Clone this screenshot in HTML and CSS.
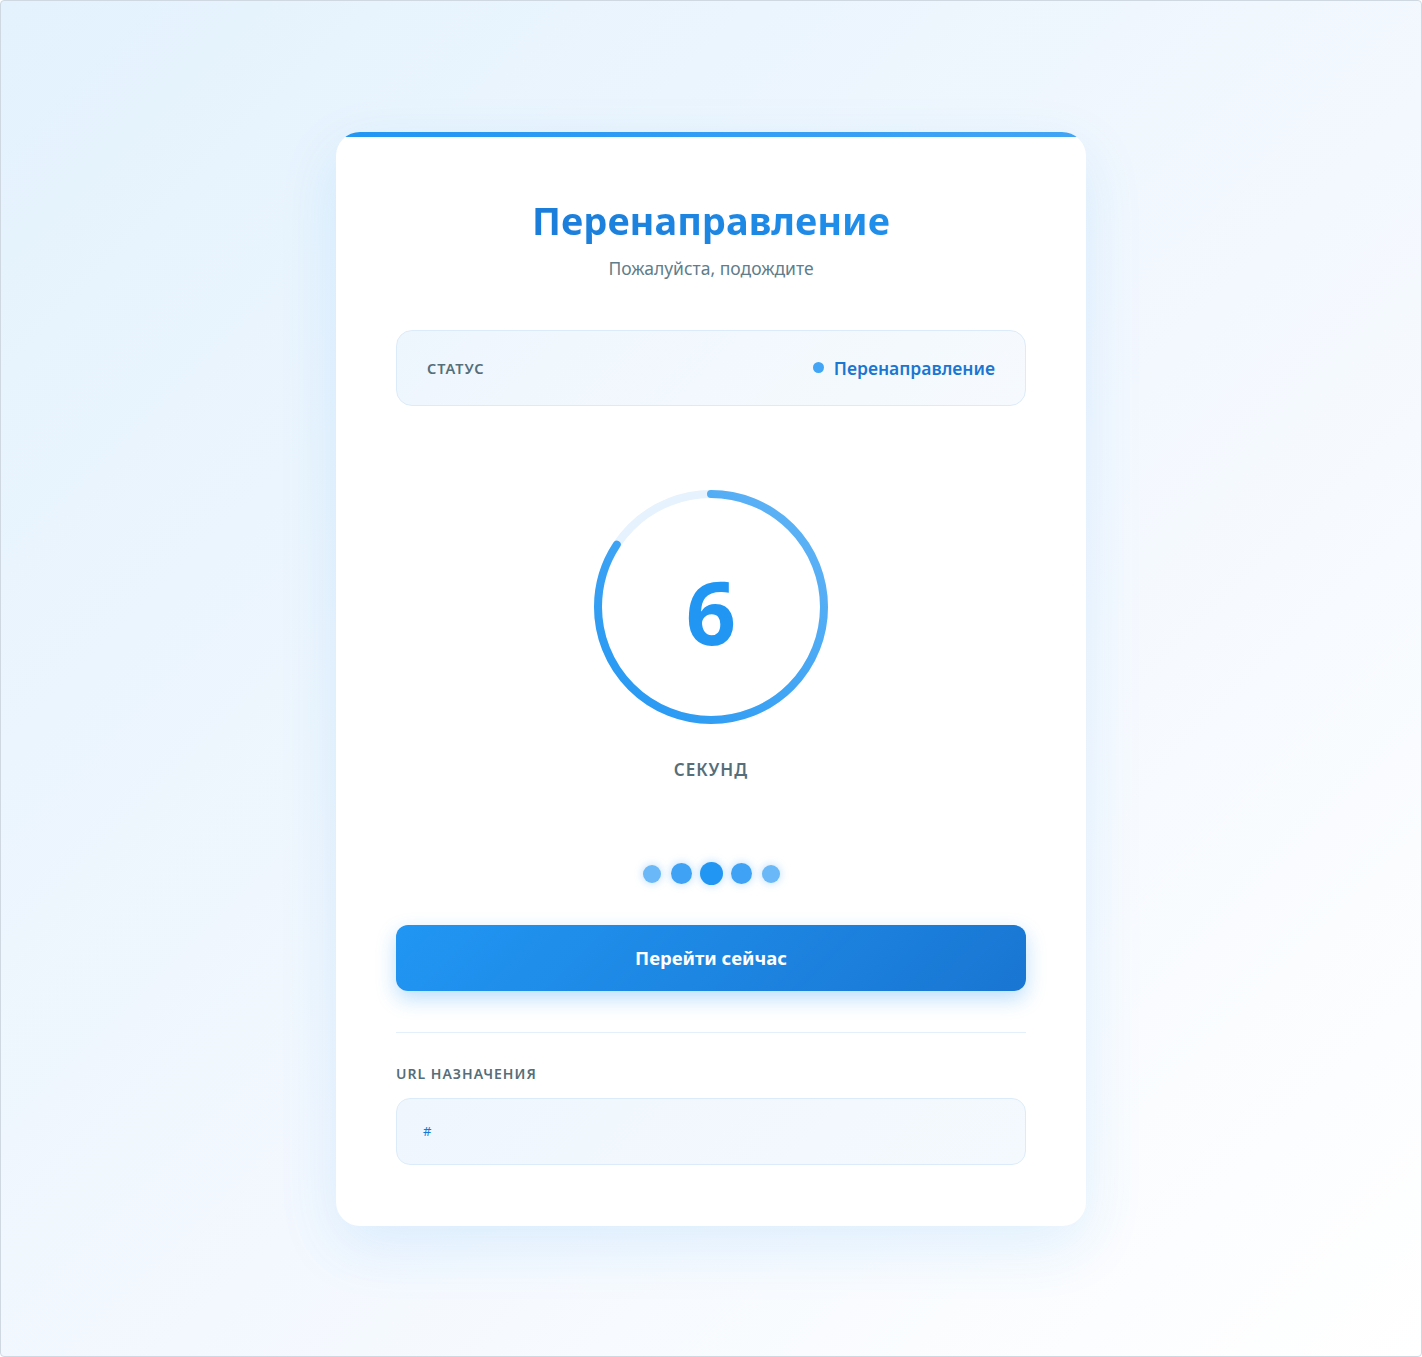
FILE: index.html
```html
<!DOCTYPE html>
<html lang="ru">
<head>
    <meta charset="utf-8">
    <title>Перенаправление</title>
    <link rel="stylesheet" href="styles.css">
</head>
<body>
    <div class="page">
        <div class="card">
            <h1 class="title">Перенаправление</h1>
            <p class="subtitle">Пожалуйста, подождите</p>

            <!-- Status row -->
            <div class="status">
                <span class="statusLabel">Статус</span>
                <span class="statusValue"><span class="statusDot"></span>Перенаправление</span>
            </div>

            <!-- Countdown ring -->
            <div class="timer">
                <div class="ring">
                    <svg width="240" height="240" viewBox="0 0 240 240">
                        <defs>
                            <linearGradient id="ringGrad" x1="1" y1="0" x2="0" y2="1">
                                <stop offset="0" stop-color="#64b5f6"/>
                                <stop offset="1" stop-color="#2196f3"/>
                            </linearGradient>
                        </defs>
                        <circle cx="120" cy="120" r="113" fill="none" stroke="#e6f2fd" stroke-width="8"/>
                        <!-- arc starts at 12 o'clock and runs clockwise -->
                        <path d="M120 7 a113 113 0 1 1 0 226 a113 113 0 1 1 0 -226"
                              fill="none" stroke="url(#ringGrad)" stroke-width="8"
                              stroke-linecap="round" stroke-dasharray="710" stroke-dashoffset="112"/>
                    </svg>
                    <span class="count">6</span>
                </div>
                <div class="timerLabel">Секунд</div>
            </div>

            <!-- Loading dots -->
            <div class="dots">
                <span class="dot d1"></span>
                <span class="dot d2"></span>
                <span class="dot d3"></span>
                <span class="dot d2"></span>
                <span class="dot d1"></span>
            </div>

            <button class="goButton">Перейти сейчас</button>

            <div class="divider"></div>

            <div class="urlLabel">URL назначения</div>
            <div class="urlBox">#</div>
        </div>
    </div>
</body>
</html>
```

FILE: styles.css
```css
html, body {
    margin: 0;
    padding: 0;
}

body {
    font-family: "Noto Sans", "Open Sans", Arial, sans-serif;
    color: #37474f;
}

.page {
    box-sizing: border-box;
    min-height: 100vh;
    border: 1px solid #cfd8e0;
    border-radius: 4px;
    background: linear-gradient(135deg, #e3f2fd 0%, #f3f8fe 55%, #ffffff 100%);
    display: flex;
    align-items: center;
    justify-content: center;
}

.card {
    position: relative;
    overflow: hidden;
    width: 750px;
    box-sizing: border-box;
    padding: 64px 60px 61px;
    background: #fff;
    border-radius: 24px;
    box-shadow: 0 20px 60px rgba(33, 150, 243, 0.12);
    display: flex;
    flex-direction: column;
}

/* Blue strip along the top edge */
.card::before {
    content: "";
    position: absolute;
    top: 0;
    left: 0;
    right: 0;
    height: 5px;
    background: linear-gradient(90deg, #2196f3, #42a5f5);
}

.title {
    margin: 0;
    text-align: center;
    font-size: 38px;
    font-weight: 700;
    line-height: 48px;
    color: #1976d2;
    background: linear-gradient(90deg, #1976d2, #2196f3);
    -webkit-background-clip: text;
    background-clip: text;
    -webkit-text-fill-color: transparent;
}

.subtitle {
    margin: 12px 0 0;
    text-align: center;
    font-size: 17.5px;
    line-height: 24px;
    color: #607d8b;
}

/* Status row */
.status {
    margin-top: 50px;
    height: 76px;
    box-sizing: border-box;
    padding: 0 30px;
    border: 1px solid #dcebf9;
    border-radius: 16px;
    background: linear-gradient(135deg, #eef6fd, #f6fafe);
    display: flex;
    align-items: center;
    justify-content: space-between;
}

.statusLabel {
    font-size: 14.5px;
    font-weight: 600;
    letter-spacing: 1px;
    text-transform: uppercase;
    color: #546e7a;
}

.statusValue {
    display: flex;
    align-items: center;
    gap: 10px;
    font-size: 17.5px;
    font-weight: 600;
    color: #1976d2;
}

.statusDot {
    width: 11px;
    height: 11px;
    border-radius: 50%;
    background: #42a5f5;
}

/* Countdown */
.timer {
    margin-top: 81px;
    display: flex;
    flex-direction: column;
    align-items: center;
}

.ring {
    position: relative;
    width: 240px;
    height: 240px;
}

.ring svg {
    display: block;
}

.count {
    position: absolute;
    inset: 0;
    display: flex;
    align-items: center;
    justify-content: center;
    padding-top: 8px;
    font-size: 88px;
    font-weight: 700;
    color: #2196f3;
}

.timerLabel {
    margin-top: 31px;
    font-size: 17px;
    font-weight: 600;
    letter-spacing: 1px;
    text-transform: uppercase;
    color: #546e7a;
}

/* Loading dots */
.dots {
    margin-top: 81px;
    height: 24px;
    display: flex;
    align-items: center;
    justify-content: center;
    gap: 8px;
}

.dot {
    border-radius: 50%;
    background: #42a5f5;
    box-shadow: 0 0 8px rgba(33, 150, 243, 0.35);
}

.d1 {
    width: 18px;
    height: 18px;
    margin: 0 2px;
    background: #6ab8f7;
}

.d2 {
    width: 21px;
    height: 21px;
    background: #3fa2f4;
}

.d3 {
    width: 23px;
    height: 23px;
    background: #2196f3;
}

.goButton {
    margin-top: 39px;
    height: 66px;
    border: none;
    border-radius: 12px;
    background: linear-gradient(135deg, #2196f3, #1976d2);
    box-shadow: 0 8px 20px rgba(33, 150, 243, 0.3);
    font-family: inherit;
    font-size: 18.5px;
    font-weight: 700;
    color: #fff;
    cursor: pointer;
}

.divider {
    margin-top: 41px;
    height: 1px;
    background: #e3f0fb;
}

.urlLabel {
    margin-top: 31px;
    font-size: 14px;
    font-weight: 600;
    letter-spacing: 1px;
    text-transform: uppercase;
    color: #546e7a;
}

.urlBox {
    margin-top: 15px;
    height: 67px;
    box-sizing: border-box;
    padding: 0 26px;
    border: 1px solid #dcebf9;
    border-radius: 14px;
    background: linear-gradient(135deg, #eff6fd, #f4f9fe);
    display: flex;
    align-items: center;
    font-size: 13px;
    color: #1976d2;
}
```
